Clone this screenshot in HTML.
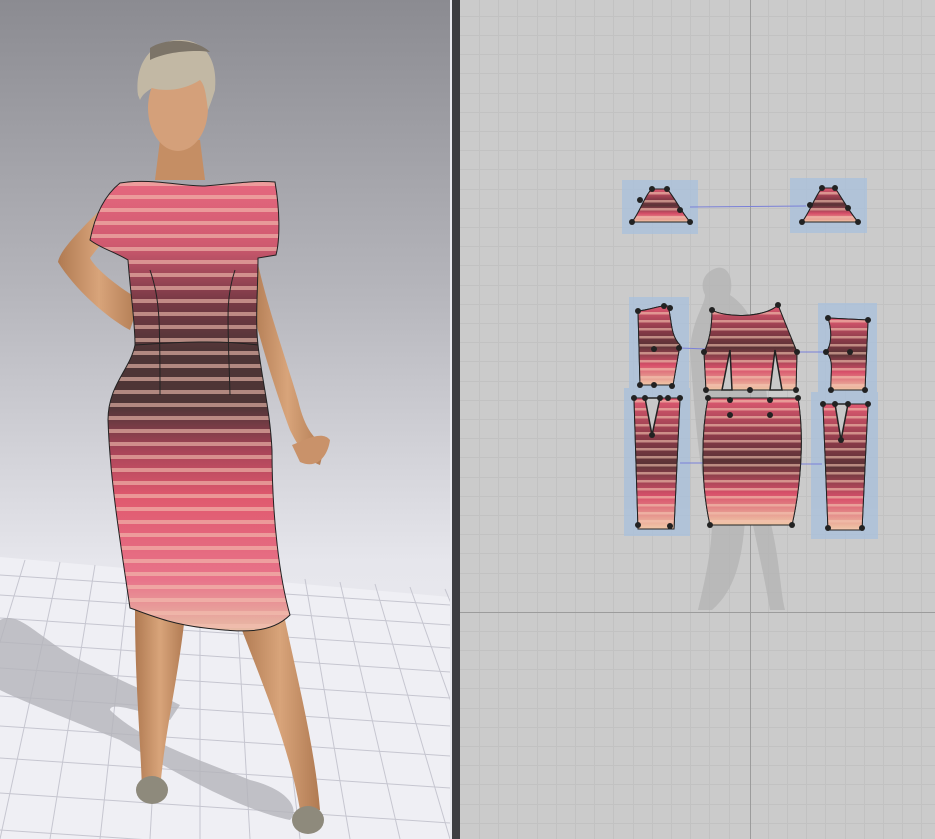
<!DOCTYPE html>
<html><head><meta charset="utf-8"><style>
html,body{margin:0;padding:0;width:935px;height:839px;overflow:hidden;background:#ccc}
svg{display:block}
</style></head><body>
<svg width="935" height="839" viewBox="0 0 935 839" xmlns="http://www.w3.org/2000/svg">
<defs>
<linearGradient id="bg" x1="0" y1="0" x2="0" y2="1">
<stop offset="0" stop-color="#8b8b91"/><stop offset="0.35" stop-color="#b6b6bc"/><stop offset="0.67" stop-color="#e6e6ec"/><stop offset="1" stop-color="#f1f1f6"/>
</linearGradient>
<linearGradient id="fab" gradientUnits="userSpaceOnUse" x1="0" y1="175" x2="0" y2="635">
<stop offset="0" stop-color="#e86a80"/><stop offset="0.15" stop-color="#d05a70"/><stop offset="0.27" stop-color="#7a3a46"/><stop offset="0.38" stop-color="#4e3536"/><stop offset="0.5" stop-color="#4e3536"/><stop offset="0.6" stop-color="#a84458"/><stop offset="0.7" stop-color="#e0596e"/><stop offset="0.88" stop-color="#e8748a"/><stop offset="1" stop-color="#e8c2a8"/>
</linearGradient>
<pattern id="str" width="20" height="13" patternUnits="userSpaceOnUse">
<rect y="0" width="20" height="4" fill="#f4c0b0" opacity="0.6"/>
</pattern>
<linearGradient id="pfab" x1="0" y1="0" x2="0" y2="1">
<stop offset="0" stop-color="#e05a72"/><stop offset="0.3" stop-color="#8a3a48"/><stop offset="0.5" stop-color="#5a3336"/><stop offset="0.75" stop-color="#d8506a"/><stop offset="1" stop-color="#f0c8a8"/>
</linearGradient>
<pattern id="pstr" width="10" height="8" patternUnits="userSpaceOnUse">
<rect width="10" height="2.5" fill="#f4c4b0" opacity="0.6"/>
</pattern>
<linearGradient id="skin" x1="0" y1="0" x2="1" y2="0">
<stop offset="0" stop-color="#b07a52"/><stop offset="0.5" stop-color="#d8a47a"/><stop offset="1" stop-color="#b07a52"/>
</linearGradient>
</defs>

<rect x="0" y="0" width="450" height="839" fill="url(#bg)"/>
<polygon points="0,557 450,597 450,839 0,839" fill="#efeff4"/>
<g stroke="#c6c6d0" stroke-width="1">
<line x1="0" y1="575" x2="450" y2="605"/><line x1="0" y1="595" x2="450" y2="625"/><line x1="0" y1="618" x2="450" y2="648"/><line x1="0" y1="642" x2="450" y2="672"/><line x1="0" y1="668" x2="450" y2="698"/><line x1="0" y1="696" x2="450" y2="726"/><line x1="0" y1="726" x2="450" y2="756"/><line x1="0" y1="758" x2="450" y2="788"/><line x1="0" y1="793" x2="450" y2="823"/><line x1="0" y1="830" x2="450" y2="860"/>
<line x1="25" y1="560" x2="-60" y2="839"/><line x1="60" y1="562" x2="0" y2="839"/><line x1="95" y1="565" x2="50" y2="839"/><line x1="130" y1="567" x2="100" y2="839"/><line x1="165" y1="570" x2="150" y2="839"/><line x1="200" y1="572" x2="200" y2="839"/><line x1="235" y1="574" x2="250" y2="839"/><line x1="270" y1="577" x2="300" y2="839"/><line x1="305" y1="579" x2="350" y2="839"/><line x1="340" y1="582" x2="400" y2="839"/><line x1="375" y1="584" x2="450" y2="839"/><line x1="410" y1="587" x2="500" y2="839"/><line x1="445" y1="589" x2="550" y2="839"/>
</g>
<path d="M0,620 C20,610 40,640 80,660 C120,680 140,690 170,700 L180,705 L170,720 C150,715 110,700 110,710 C140,740 200,760 250,780 C290,790 300,810 290,820 C240,810 170,770 120,740 C70,720 20,700 0,690 Z" fill="#b4b4ba" opacity="0.8"/>
<path d="M110,200 C80,230 60,250 58,262 C75,290 110,320 130,330 L140,300 C115,285 95,268 90,258 C100,245 112,230 120,220 Z" fill="url(#skin)"/>
<path d="M255,250 C265,300 280,340 298,400 C305,430 315,440 325,445 L320,465 C305,460 295,440 290,430 C275,390 260,340 250,300 Z" fill="url(#skin)"/>
<path d="M292,445 C305,440 322,430 330,440 C328,455 318,470 300,462 Z" fill="#c9926a"/>
<path d="M135,610 L185,615 C178,680 165,730 160,790 L142,790 C140,730 135,680 135,610 Z" fill="url(#skin)"/>
<path d="M240,625 L285,620 C300,690 315,750 320,810 L300,810 C290,750 265,690 240,625 Z" fill="url(#skin)"/>
<ellipse cx="152" cy="790" rx="16" ry="14" fill="#8e8a7c"/>
<ellipse cx="308" cy="820" rx="16" ry="14" fill="#8e8a7c"/>
<path d="M160,140 L200,140 L205,180 L155,180 Z" fill="#c58e64"/>
<ellipse cx="178" cy="108" rx="30" ry="43" fill="#d4a07a"/>
<path d="M138,95 C134,60 155,40 180,40 C205,40 218,60 215,90 C212,100 210,105 208,110 C206,95 205,85 200,80 C185,90 165,92 152,88 C146,92 142,95 140,100 Z" fill="#c2b8a4"/>
<path d="M150,48 C165,38 195,38 210,52 C200,50 170,50 150,60 Z" fill="#7c7468"/>
<g>
<path d="M120,183 C150,178 180,186 205,186 C230,184 255,180 275,182 C280,210 280,240 276,255 L258,258 C258,290 255,320 258,345 C262,380 270,410 272,450 C272,520 280,580 290,615 C270,635 240,632 205,628 C170,624 150,615 130,608 C120,540 110,480 108,420 C108,385 130,370 135,345 C135,320 130,290 128,260 C115,252 100,248 90,240 C95,215 105,195 120,183 Z" fill="url(#fab)"/>
<path d="M120,183 C150,178 180,186 205,186 C230,184 255,180 275,182 C280,210 280,240 276,255 L258,258 C258,290 255,320 258,345 C262,380 270,410 272,450 C272,520 280,580 290,615 C270,635 240,632 205,628 C170,624 150,615 130,608 C120,540 110,480 108,420 C108,385 130,370 135,345 C135,320 130,290 128,260 C115,252 100,248 90,240 C95,215 105,195 120,183 Z" fill="url(#str)" stroke="#222" stroke-width="1"/>
<path d="M135,345 C180,342 220,340 258,345" fill="none" stroke="#222"/>
<path d="M150,270 C160,300 160,320 160,395 M235,270 C225,300 228,320 230,395" fill="none" stroke="#222"/>
</g>

<rect x="450" y="0" width="2" height="839" fill="#e8e8ec"/>
<rect x="452" y="0" width="8" height="839" fill="#3e3e40"/>

<rect x="460" y="0" width="475" height="839" fill="#cbcbcb"/>
<g stroke="#c2c2c2" stroke-width="1">
<line x1="479.5" y1="0" x2="479.5" y2="839"/><line x1="498.5" y1="0" x2="498.5" y2="839"/><line x1="517.5" y1="0" x2="517.5" y2="839"/><line x1="537.5" y1="0" x2="537.5" y2="839"/><line x1="556.5" y1="0" x2="556.5" y2="839"/><line x1="575.5" y1="0" x2="575.5" y2="839"/><line x1="594.5" y1="0" x2="594.5" y2="839"/><line x1="613.5" y1="0" x2="613.5" y2="839"/><line x1="633.5" y1="0" x2="633.5" y2="839"/><line x1="652.5" y1="0" x2="652.5" y2="839"/><line x1="671.5" y1="0" x2="671.5" y2="839"/><line x1="690.5" y1="0" x2="690.5" y2="839"/><line x1="709.5" y1="0" x2="709.5" y2="839"/><line x1="729.5" y1="0" x2="729.5" y2="839"/><line x1="768.5" y1="0" x2="768.5" y2="839"/><line x1="787.5" y1="0" x2="787.5" y2="839"/><line x1="806.5" y1="0" x2="806.5" y2="839"/><line x1="825.5" y1="0" x2="825.5" y2="839"/><line x1="845.5" y1="0" x2="845.5" y2="839"/><line x1="864.5" y1="0" x2="864.5" y2="839"/><line x1="883.5" y1="0" x2="883.5" y2="839"/><line x1="902.5" y1="0" x2="902.5" y2="839"/><line x1="921.5" y1="0" x2="921.5" y2="839"/>
<line x1="460" y1="16.5" x2="935" y2="16.5"/><line x1="460" y1="35.5" x2="935" y2="35.5"/><line x1="460" y1="54.5" x2="935" y2="54.5"/><line x1="460" y1="73.5" x2="935" y2="73.5"/><line x1="460" y1="93.5" x2="935" y2="93.5"/><line x1="460" y1="112.5" x2="935" y2="112.5"/><line x1="460" y1="131.5" x2="935" y2="131.5"/><line x1="460" y1="150.5" x2="935" y2="150.5"/><line x1="460" y1="169.5" x2="935" y2="169.5"/><line x1="460" y1="189.5" x2="935" y2="189.5"/><line x1="460" y1="208.5" x2="935" y2="208.5"/><line x1="460" y1="227.5" x2="935" y2="227.5"/><line x1="460" y1="246.5" x2="935" y2="246.5"/><line x1="460" y1="265.5" x2="935" y2="265.5"/><line x1="460" y1="285.5" x2="935" y2="285.5"/><line x1="460" y1="304.5" x2="935" y2="304.5"/><line x1="460" y1="323.5" x2="935" y2="323.5"/><line x1="460" y1="342.5" x2="935" y2="342.5"/><line x1="460" y1="361.5" x2="935" y2="361.5"/><line x1="460" y1="381.5" x2="935" y2="381.5"/><line x1="460" y1="400.5" x2="935" y2="400.5"/><line x1="460" y1="419.5" x2="935" y2="419.5"/><line x1="460" y1="438.5" x2="935" y2="438.5"/><line x1="460" y1="457.5" x2="935" y2="457.5"/><line x1="460" y1="477.5" x2="935" y2="477.5"/><line x1="460" y1="496.5" x2="935" y2="496.5"/><line x1="460" y1="515.5" x2="935" y2="515.5"/><line x1="460" y1="534.5" x2="935" y2="534.5"/><line x1="460" y1="553.5" x2="935" y2="553.5"/><line x1="460" y1="573.5" x2="935" y2="573.5"/><line x1="460" y1="592.5" x2="935" y2="592.5"/><line x1="460" y1="631.5" x2="935" y2="631.5"/><line x1="460" y1="650.5" x2="935" y2="650.5"/><line x1="460" y1="669.5" x2="935" y2="669.5"/><line x1="460" y1="688.5" x2="935" y2="688.5"/><line x1="460" y1="708.5" x2="935" y2="708.5"/><line x1="460" y1="727.5" x2="935" y2="727.5"/><line x1="460" y1="746.5" x2="935" y2="746.5"/><line x1="460" y1="765.5" x2="935" y2="765.5"/><line x1="460" y1="784.5" x2="935" y2="784.5"/><line x1="460" y1="804.5" x2="935" y2="804.5"/><line x1="460" y1="823.5" x2="935" y2="823.5"/>
</g>
<line x1="750.5" y1="0" x2="750.5" y2="839" stroke="#9c9c9c"/>
<line x1="460" y1="612.5" x2="935" y2="612.5" stroke="#9c9c9c"/>
<path d="M712,270 C725,262 735,275 730,295 C745,305 755,320 760,350 C770,400 775,480 770,520 C780,560 780,590 785,610 L770,610 C765,580 758,550 752,520 L745,520 C742,560 735,590 712,610 L698,610 C705,580 712,550 712,520 C700,480 695,420 690,350 C692,320 705,305 705,295 C700,285 703,275 712,270 Z" fill="#b4b4b4" opacity="0.8"/>

<g fill="#a8c0dc" opacity="0.75">
<rect x="622" y="180" width="76" height="54"/>
<rect x="790" y="178" width="77" height="55"/>
<rect x="629" y="297" width="60" height="92"/>
<rect x="818" y="303" width="59" height="92"/>
<rect x="624" y="388" width="66" height="148"/>
<rect x="811" y="392" width="67" height="147"/>
</g>
<line x1="690" y1="207" x2="806" y2="206" stroke="#7a80d8"/>
<line x1="680" y1="348" x2="706" y2="349" stroke="#7a80d8"/>
<line x1="798" y1="352" x2="830" y2="352" stroke="#7a80d8"/>
<line x1="680" y1="463" x2="704" y2="463" stroke="#7a80d8"/>
<line x1="800" y1="464" x2="822" y2="464" stroke="#7a80d8"/>
<g stroke="#222" stroke-width="1">
<g id="pieces">
<path d="M632,222 C640,212 645,195 652,189 L667,189 C675,198 680,210 690,222 Z"/>
<path d="M802,222 C810,212 815,196 822,188 L835,188 C842,198 848,210 858,222 Z"/>
<path d="M638,311 C650,310 660,305 668,306 C672,320 670,335 680,345 L673,385 L640,385 Z"/>
<path d="M828,318 L868,320 L865,390 L831,390 C830,375 835,360 826,352 C832,345 832,330 828,318 Z"/>
<path d="M712,310 C725,318 765,318 778,305 L788,330 L797,352 L796,390 L706,390 L704,352 C710,340 712,325 712,310 Z"/>
<path d="M634,398 L680,398 L674,529 L638,529 Z"/>
<path d="M708,398 L798,398 C805,440 800,490 792,525 L710,525 C702,490 700,440 708,398 Z"/>
<path d="M823,404 L868,404 L862,530 L828,530 Z"/>
</g>
</g>
<g fill="url(#pfab)"><use href="#pieces"/></g>
<g fill="url(#pstr)" stroke="#222" stroke-width="1"><use href="#pieces"/></g>
<g stroke="#222" stroke-width="1.5" fill="#c8c8c8">
<path d="M645,398 L652,435 L660,398 Z"/>
<path d="M835,404 L841,440 L848,404 Z"/>
<path d="M730,350 L732,390 L722,390 Z M775,350 L770,390 L782,390 Z"/>
</g>
<g fill="#222">
<circle cx="632" cy="222" r="3"/><circle cx="690" cy="222" r="3"/><circle cx="652" cy="189" r="3"/><circle cx="667" cy="189" r="3"/><circle cx="640" cy="200" r="3"/><circle cx="680" cy="210" r="3"/>
<circle cx="802" cy="222" r="3"/><circle cx="858" cy="222" r="3"/><circle cx="822" cy="188" r="3"/><circle cx="835" cy="188" r="3"/><circle cx="810" cy="205" r="3"/><circle cx="848" cy="208" r="3"/>
<circle cx="638" cy="311" r="3"/><circle cx="664" cy="306" r="3"/><circle cx="670" cy="308" r="3"/><circle cx="679" cy="348" r="3"/><circle cx="640" cy="385" r="3"/><circle cx="654" cy="385" r="3"/><circle cx="672" cy="386" r="3"/><circle cx="654" cy="349" r="3"/>
<circle cx="634" cy="398" r="3"/><circle cx="680" cy="398" r="3"/><circle cx="645" cy="398" r="3"/><circle cx="660" cy="398" r="3"/><circle cx="668" cy="398" r="3"/><circle cx="652" cy="435" r="3"/><circle cx="638" cy="525" r="3"/><circle cx="670" cy="526" r="3"/>
<circle cx="712" cy="310" r="3"/><circle cx="778" cy="305" r="3"/><circle cx="797" cy="352" r="3"/><circle cx="704" cy="352" r="3"/><circle cx="706" cy="390" r="3"/><circle cx="796" cy="390" r="3"/><circle cx="750" cy="390" r="3"/>
<circle cx="708" cy="398" r="3"/><circle cx="798" cy="398" r="3"/><circle cx="730" cy="400" r="3"/><circle cx="770" cy="400" r="3"/><circle cx="710" cy="525" r="3"/><circle cx="792" cy="525" r="3"/><circle cx="730" cy="415" r="3"/><circle cx="770" cy="415" r="3"/>
<circle cx="828" cy="318" r="3"/><circle cx="868" cy="320" r="3"/><circle cx="831" cy="390" r="3"/><circle cx="865" cy="390" r="3"/><circle cx="826" cy="352" r="3"/><circle cx="850" cy="352" r="3"/>
<circle cx="823" cy="404" r="3"/><circle cx="868" cy="404" r="3"/><circle cx="835" cy="404" r="3"/><circle cx="848" cy="404" r="3"/><circle cx="841" cy="440" r="3"/><circle cx="828" cy="528" r="3"/><circle cx="862" cy="528" r="3"/>
</g>
</svg>
</body></html>
